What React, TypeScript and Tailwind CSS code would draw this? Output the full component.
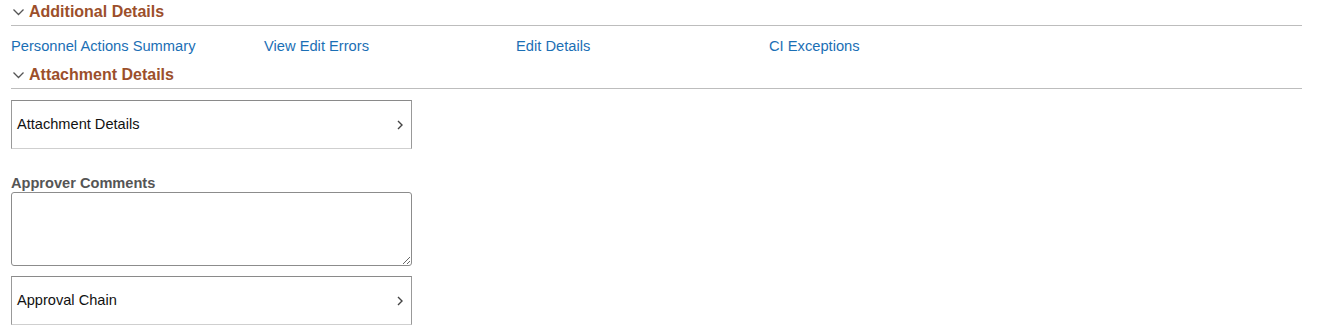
import React from 'react';

const links = ['Personnel Actions Summary', 'View Edit Errors', 'Edit Details', 'CI Exceptions'];

function ChevronDown() {
  return (
    <svg width="16" height="10" viewBox="0 0 16 10" className="shrink-0">
      <polyline points="2.5,2.5 7.5,7.5 12.5,2.5" fill="none" stroke="#555" strokeWidth="1.3" />
    </svg>
  );
}

function ChevronRight() {
  return (
    <svg width="8" height="12" viewBox="0 0 8 12">
      <polyline points="2,2 6,6 2,10" fill="none" stroke="#444" strokeWidth="1.4" />
    </svg>
  );
}

function SectionHeader({ title }: { title: string }) {
  return (
    <div className="flex items-center h-[26px] border-b border-[#bdbdbd] pb-[1px]">
      <ChevronDown />
      <span className="text-[16px] leading-[18px] font-bold text-[#9c4f2b] ml-[2px]">{title}</span>
    </div>
  );
}

function NavBox({ label }: { label: string }) {
  return (
    <button className="flex items-center justify-between w-[401px] h-[49px] pl-[5px] pr-[7px] border border-[#999] border-t-[#8a8a8a] border-b-[#cfcfcf] bg-white text-left">
      <span className="text-[14.6px] text-[#111]">{label}</span>
      <ChevronRight />
    </button>
  );
}

export default function App() {
  return (
    <div className="w-[1319px] h-[332px] bg-white pl-[11px] pr-[17px]" style={{ fontFamily: '"Liberation Sans", Arial, sans-serif' }}>
      <SectionHeader title="Additional Details" />
      <div className="grid grid-cols-[253px_252px_253px_253px] h-[36px] items-center pt-[4px]">
        {links.map((l) => (
          <a key={l} className="text-[14.7px] text-[#1b6fb5] cursor-pointer whitespace-nowrap">{l}</a>
        ))}
      </div>
      <div className="pt-[1px]">
        <SectionHeader title="Attachment Details" />
      </div>
      <div className="mt-[11px]">
        <NavBox label="Attachment Details" />
      </div>
      <div className="mt-[26px] text-[14.6px] leading-[16px] font-bold text-[#555]">Approver Comments</div>
      <textarea className="block mt-[1px] w-[401px] h-[74px] border border-[#8c8c8c] rounded-[3px] bg-white" />
      <div className="mt-[10px]">
        <NavBox label="Approval Chain" />
      </div>
    </div>
  );
}
